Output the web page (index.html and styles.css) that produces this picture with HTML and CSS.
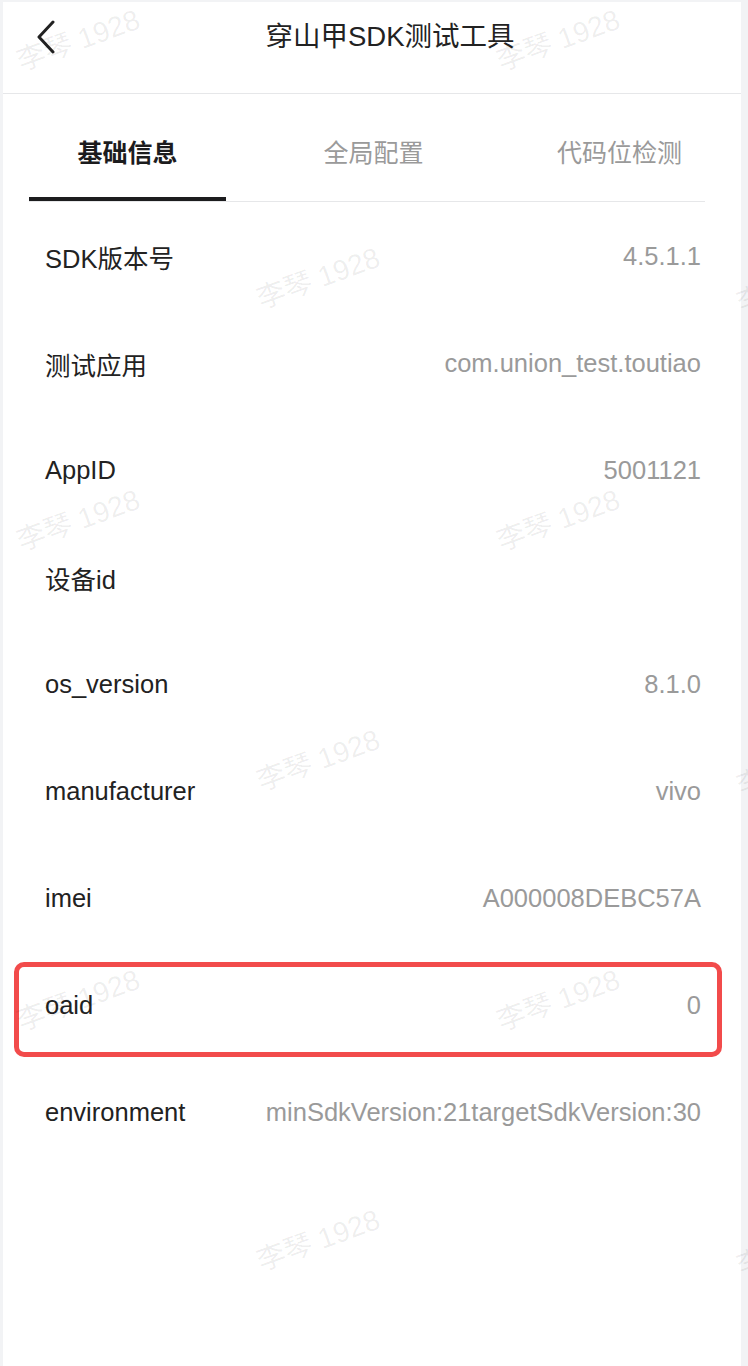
FILE: index.html
```html
<!DOCTYPE html>
<html lang="zh-CN">
<head>
<meta charset="utf-8">
<title>穿山甲SDK测试工具</title>
<link rel="stylesheet" href="styles.css">
</head>
<body>
<div class="page">
  <header class="header">
    <div class="back">
      <svg width="20" height="34" viewBox="0 0 20 34"><path d="M17 2 L3 17 L17 32" fill="none" stroke="#222" stroke-width="3" stroke-linecap="round" stroke-linejoin="round"/></svg>
    </div>
    <div class="title">穿山甲SDK测试工具</div>
    <div></div>
  </header>
  <nav class="tabs">
    <div class="tab active">基础信息</div>
    <div class="tab">全局配置</div>
    <div class="tab">代码位检测</div>
  </nav>
  <main class="list">
    <div class="row"><span class="label">SDK版本号</span><span class="value">4.5.1.1</span></div>
    <div class="row"><span class="label">测试应用</span><span class="value">com.union_test.toutiao</span></div>
    <div class="row"><span class="label">AppID</span><span class="value">5001121</span></div>
    <div class="row"><span class="label">设备id</span><span class="value"></span></div>
    <div class="row"><span class="label">os_version</span><span class="value">8.1.0</span></div>
    <div class="row"><span class="label">manufacturer</span><span class="value">vivo</span></div>
    <div class="row"><span class="label">imei</span><span class="value">A000008DEBC57A</span></div>
    <div class="row highlighted"><span class="label">oaid</span><span class="value">0</span><span class="mark-box"></span></div>
    <div class="row"><span class="label">environment</span><span class="value">minSdkVersion:21targetSdkVersion:30</span></div>
  </main>
</div>
<div class="watermarks">
  <span class="wm" style="left:14px;top:20px">李琴 1928</span>
  <span class="wm" style="left:494px;top:20px">李琴 1928</span>
  <span class="wm" style="left:254px;top:258px">李琴 1928</span>
  <span class="wm" style="left:734px;top:262px">李琴 1928</span>
  <span class="wm" style="left:14px;top:500px">李琴 1928</span>
  <span class="wm" style="left:494px;top:500px">李琴 1928</span>
  <span class="wm" style="left:254px;top:740px">李琴 1928</span>
  <span class="wm" style="left:734px;top:745px">李琴 1928</span>
  <span class="wm" style="left:14px;top:980px">李琴 1928</span>
  <span class="wm" style="left:494px;top:980px">李琴 1928</span>
  <span class="wm" style="left:254px;top:1220px">李琴 1928</span>
  <span class="wm" style="left:734px;top:1225px">李琴 1928</span>
</div>
</body>
</html>
```
FILE: styles.css
```css
html, body {
  margin: 0;
  padding: 0;
}
body {
  background: #f2f3f5;
  font-family: "Liberation Sans", "Noto Sans CJK SC", sans-serif;
  width: 748px;
  height: 1366px;
  overflow: hidden;
  position: relative;
}
.page {
  margin: 2px 7px 0 3px;
  background: #fff;
  min-height: 1364px;
}
.header {
  display: grid;
  grid-template-columns: 1fr auto 1fr;
  align-items: start;
  padding-top: 18px;
  box-sizing: border-box;
  height: 92px;
  border-bottom: 1px solid #e6e7e9;
}
.back {
  padding-left: 33px;
  line-height: 0;
}
.title {
  font-size: 27.5px;
  line-height: 34px;
  color: #222;
  margin-left: 36px;
}
.tabs {
  display: flex;
  gap: 49px;
  margin: 0 36px 0 26px;
  border-bottom: 1px solid #e6e7e9;
}
.tab {
  flex: 0 0 197px;
  text-align: center;
  font-size: 25px;
  line-height: 34px;
  padding: 42px 0 27px;
  color: #9a9a9a;
  border-bottom: 4px solid transparent;
}
.tab.active {
  color: #1c1c1e;
  font-weight: bold;
  border-bottom-color: #1c1c1e;
}
.list {
  padding-top: 1px;
}
.row {
  height: 107px;
  display: flex;
  justify-content: space-between;
  align-items: center;
  padding: 0 40px 0 42px;
  font-size: 25.5px;
  position: relative;
}
.label {
  color: #222;
}
.value {
  color: #9a9a9a;
}
.mark-box {
  position: absolute;
  left: 11px;
  right: 19px;
  top: 10px;
  bottom: 2px;
  border: 5px solid #f24b4b;
  border-radius: 10px;
  box-sizing: border-box;
}
.watermarks {
  position: absolute;
  inset: 0;
  pointer-events: none;
  overflow: hidden;
}
.wm {
  position: absolute;
  font-size: 28.5px;
  color: rgba(0, 0, 0, 0.07);
  transform: rotate(-20deg);
  transform-origin: center;
  white-space: nowrap;
  line-height: 40px;
}
```
